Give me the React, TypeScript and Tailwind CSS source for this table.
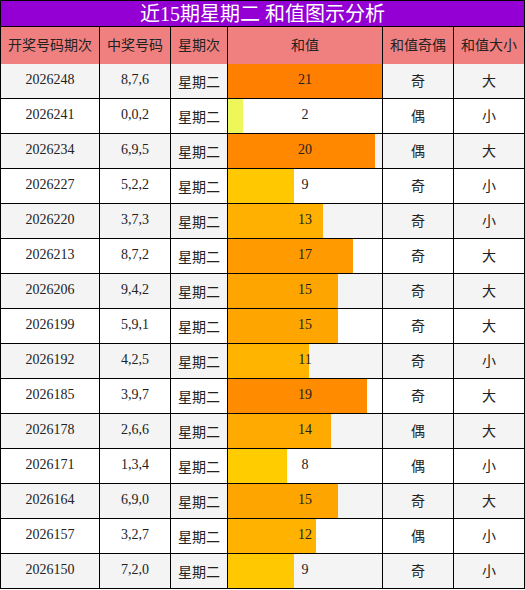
import React from "react";

interface DrawRow {
  issue: string;
  nums: string;
  sum: number;
  bar: string;
  parity: string;
  size: string;
}

const rows: DrawRow[] = [
  { issue: "2026248", nums: "8,7,6", sum: 21, bar: "bg-[#ff8000]", parity: "奇", size: "大" },
  { issue: "2026241", nums: "0,0,2", sum: 2, bar: "bg-[#eef75a]", parity: "偶", size: "小" },
  { issue: "2026234", nums: "6,9,5", sum: 20, bar: "bg-[#ff8800]", parity: "偶", size: "大" },
  { issue: "2026227", nums: "5,2,2", sum: 9, bar: "bg-[#ffc800]", parity: "奇", size: "小" },
  { issue: "2026220", nums: "3,7,3", sum: 13, bar: "bg-[#ffb000]", parity: "奇", size: "小" },
  { issue: "2026213", nums: "8,7,2", sum: 17, bar: "bg-[#ff9a00]", parity: "奇", size: "大" },
  { issue: "2026206", nums: "9,4,2", sum: 15, bar: "bg-[#ffa500]", parity: "奇", size: "大" },
  { issue: "2026199", nums: "5,9,1", sum: 15, bar: "bg-[#ffa500]", parity: "奇", size: "大" },
  { issue: "2026192", nums: "4,2,5", sum: 11, bar: "bg-[#ffb400]", parity: "奇", size: "小" },
  { issue: "2026185", nums: "3,9,7", sum: 19, bar: "bg-[#ff8c00]", parity: "奇", size: "大" },
  { issue: "2026178", nums: "2,6,6", sum: 14, bar: "bg-[#ffaa00]", parity: "偶", size: "大" },
  { issue: "2026171", nums: "1,3,4", sum: 8, bar: "bg-[#ffcc00]", parity: "偶", size: "小" },
  { issue: "2026164", nums: "6,9,0", sum: 15, bar: "bg-[#ffa500]", parity: "奇", size: "大" },
  { issue: "2026157", nums: "3,2,7", sum: 12, bar: "bg-[#ffb200]", parity: "偶", size: "小" },
  { issue: "2026150", nums: "7,2,0", sum: 9, bar: "bg-[#ffc800]", parity: "奇", size: "小" },
];

const MAX_SUM = 21;
const BAR_WIDTH = 154;

export default function App() {
  return (
    <div
      className="w-[525px] border border-black text-[14px] text-[#222]"
      style={{ fontFamily: '"Liberation Serif", "Noto Sans CJK SC", serif' }}
    >
      {/* Title */}
      <div className="h-[26px] bg-[#9400d3] border-b border-black flex items-center justify-center text-white text-[20px] leading-none">
        近15期星期二 和值图示分析
      </div>

      {/* Header */}
      <div className="h-[37px] flex bg-[#f08080] text-[#222]">
        <div className="w-[98px] flex items-center justify-center">开奖号码期次</div>
        <div className="w-[71px] border-l border-black flex items-center justify-center">中奖号码</div>
        <div className="w-[57px] border-l border-black flex items-center justify-center">星期次</div>
        <div className="w-[155px] border-l border-black flex items-center justify-center">和值</div>
        <div className="w-[71px] border-l border-black flex items-center justify-center">和值奇偶</div>
        <div className="w-[71px] border-l border-black flex items-center justify-center">和值大小</div>
      </div>

      {/* Rows */}
      {rows.map((r, i) => (
        <div
          key={r.issue}
          className={`flex ${i === 0 ? "h-[34px]" : "h-[35px] border-t border-black"} ${
            i % 2 === 0 ? "bg-[#f4f4f4]" : "bg-white"
          }`}
        >
          <div className="w-[98px] flex items-center justify-center pb-[3px]">{r.issue}</div>
          <div className="w-[71px] border-l border-black flex items-center justify-center pb-[3px]">{r.nums}</div>
          <div className="w-[57px] border-l border-black flex items-center justify-center pt-[2px]">星期二</div>
          <div className="w-[155px] border-l border-black relative flex items-center justify-center">
            <div
              className={`absolute left-0 top-0 bottom-0 ${r.bar}`}
              style={{ width: `${(r.sum / MAX_SUM) * BAR_WIDTH}px` }}
            />
            <span className="relative pb-[3px]">{r.sum}</span>
          </div>
          <div className="w-[71px] border-l border-black flex items-center justify-center">{r.parity}</div>
          <div className="w-[71px] border-l border-black flex items-center justify-center">{r.size}</div>
        </div>
      ))}
    </div>
  );
}
